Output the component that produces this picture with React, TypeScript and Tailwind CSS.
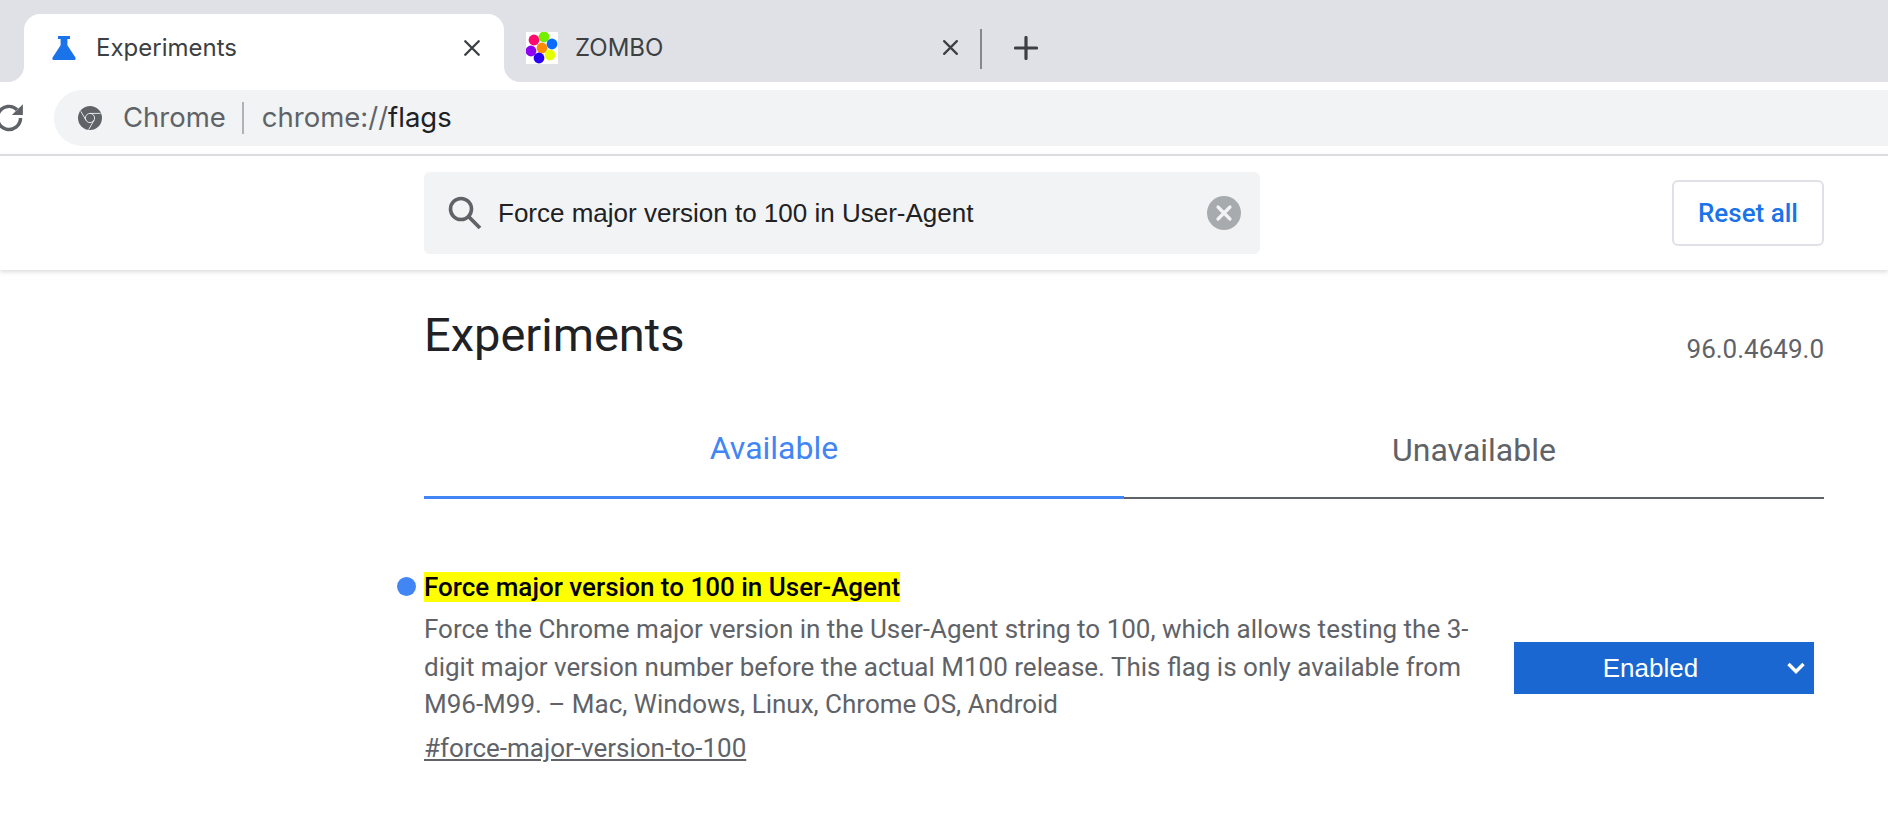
import { ReactNode } from "react";

const ui = "font-['Inter',sans-serif]";
const roboto = "font-['Roboto',sans-serif]";
const arial = "font-['Liberation_Sans',Arial,sans-serif]";

function CloseIcon({ className }: { className: string }) {
  return (
    <svg viewBox="0 0 16 16" className={className} fill="none" stroke="#3c4043" strokeWidth="2.1" strokeLinecap="round">
      <path d="M2 2l12 12M14 2L2 14" />
    </svg>
  );
}

function Flask() {
  return (
    <svg viewBox="0 0 24 24" className="w-[24px] h-[24px]" fill="#1a73e8">
      <path d="M6 0h12v3h-2.600v6.200L23.400 21.400c.7 1.200 0 2.600-1.400 2.600H2c-1.400 0-2.100-1.400-1.400-2.600L8.600 9.200V3H6z" />
    </svg>
  );
}

function Zombo() {
  const dots = [
    ["#ff0a6c", 8, 8],
    ["#72f000", 18, 5],
    ["#0a6cff", 26, 12],
    ["#ff8c00", 16, 16],
    ["#9000f0", 5, 19],
    ["#e4ff00", 24, 23],
    ["#2a00f5", 13, 26],
  ] as const;
  return (
    <svg viewBox="0 0 32 32" className="w-[32px] h-[32px] bg-white">
      {dots.map(([fill, cx, cy]) => (
        <circle key={fill} cx={cx} cy={cy} r="5.4" fill={fill} />
      ))}
    </svg>
  );
}

function ChromeLogo() {
  return (
    <svg viewBox="0 0 24 24" className="w-[24px] h-[24px]">
      <circle cx="12" cy="12" r="12" fill="#5f6368" />
      <g fill="none" stroke="#f1f3f4" strokeWidth="0.9">
        <circle cx="12" cy="12" r="4.6" />
        <path d="M12 7.400H22.500M8 14.300L2.800 5.300M16 14.300L10.700 23.500" />
      </g>
    </svg>
  );
}

function Tab({ children, className }: { children: ReactNode; className: string }) {
  return <div className={`flex items-center shrink-0 ${className}`}>{children}</div>;
}

export default function App() {
  return (
    <div className="w-full h-[834px] overflow-hidden bg-white">
      {/* tab strip */}
      <div className="h-[82px] bg-[#dfe1e6] flex items-end pl-[24px]">
        <Tab className="relative w-[480px] h-[68px] bg-white rounded-t-[16px] pl-[28px] pr-[23px] pb-[1px]">
          <span className="absolute -left-[16px] bottom-0 w-[16px] h-[16px] bg-white">
            <span className="block w-full h-full bg-[#dfe1e6] rounded-br-[16px]" />
          </span>
          <span className="absolute -right-[16px] bottom-0 w-[16px] h-[16px] bg-white">
            <span className="block w-full h-full bg-[#dfe1e6] rounded-bl-[16px]" />
          </span>
          <Flask />
          <span className={`${ui} ml-[20px] text-[24px] text-[#3c4043] flex-1`}>Experiments</span>
          <CloseIcon className="w-[18px] h-[18px]" />
        </Tab>
        <Tab className="w-[477px] h-[68px] pl-[22px] pr-[22px] pb-[1px]">
          <Zombo />
          <span className={`${ui} ml-[17px] text-[24px] text-[#3c4043] flex-1`}>ZOMBO</span>
          <CloseIcon className="w-[17px] h-[17px]" />
        </Tab>
        <div className="w-[2px] h-[40px] bg-[#86888c] mb-[13px] -ml-[1px]" />
        <svg viewBox="0 0 24 24" className="w-[24px] h-[24px] ml-[32px] mb-[22px]" fill="none" stroke="#3c4043" strokeWidth="3.200" strokeLinecap="round">
          <path d="M12 1.500v21M1.500 12h21" />
        </svg>
      </div>

      {/* toolbar */}
      <div className="h-[72px] flex items-center relative">
        <svg viewBox="0 0 26 26" className="w-[30px] h-[30px] -ml-[6px] shrink-0" fill="none">
          <path d="M23 13a10 10 0 1 1-3-7.200" stroke="#5f6368" strokeWidth="3" />
          <path d="M25 1v9.500h-9.500z" fill="#5f6368" />
        </svg>
        <div className="ml-[30px] flex-1 h-[56px] bg-[#f1f3f4] rounded-l-[28px] flex items-center pl-[24px]">
          <ChromeLogo />
          <span className={`${ui} ml-[21px] text-[27.500px] text-[#5f6368]`}>Chrome</span>
          <span className="ml-[16px] w-[2px] h-[32px] bg-[#b0b2b5]" />
          <span className={`${ui} ml-[18px] text-[27.500px] text-[#5f6368]`}>
            chrome://<span className="text-[#202124]">flags</span>
          </span>
        </div>
      </div>

      {/* flags header */}
      <div className="h-[116px] border-t-2 border-[#dadce0] shadow-[0_2px_4px_rgba(60,64,67,0.18)] pl-[424px] pr-[64px] flex items-center justify-between">
        <div className="w-[836px] h-[82px] bg-[#f1f3f4] rounded-[6px] flex items-center pl-[24px] pr-[19px]">
          <svg viewBox="0 0 34 34" className="w-[34px] h-[34px] shrink-0" fill="none" stroke="#5f6368">
            <circle cx="13" cy="13" r="10.500" strokeWidth="3.600" />
            <path d="M21 21l11 11" strokeWidth="3.800" />
          </svg>
          <span className={`${arial} ml-[16px] text-[26px] text-[#202124] flex-1`}>Force major version to 100 in User-Agent</span>
          <svg viewBox="0 0 34 34" className="w-[34px] h-[34px] shrink-0">
            <circle cx="17" cy="17" r="17" fill="#a8abae" />
            <path d="M11 11l12 12M23 11L11 23" stroke="#f1f3f4" strokeWidth="3.200" strokeLinecap="round" />
          </svg>
        </div>
        <button className={`${roboto} w-[152px] h-[66px] bg-white border-2 border-[#dfe1e6] rounded-[6px] text-[26px] font-medium text-[#1a73e8]`}>
          Reset all
        </button>
      </div>

      {/* content */}
      <div className="pl-[424px] pr-[64px]">
        <div className="flex justify-between items-end pt-[34px]">
          <h1 className={`${roboto} text-[47px] leading-[62px] text-[#202124]`}>Experiments</h1>
          <span className={`${roboto} text-[26px] leading-[32px] text-[#5f6368] mb-[1px]`}>96.0.4649.0</span>
        </div>

        <div className="flex mt-[34px]">
          <div className="flex-1 h-[99px] border-b-[3px] border-[#4285f4] flex justify-center items-center">
            <span className={`${roboto} text-[32px] text-[#4285f4]`}>Available</span>
          </div>
          <div className="flex-1 h-[99px] border-b-2 border-[#5f6368] flex justify-center items-center pt-[3px]">
            <span className={`${roboto} text-[32px] text-[#5f6368]`}>Unavailable</span>
          </div>
        </div>

        <div className={`${roboto} flex mt-[73px] relative`}>
          <span className="absolute -left-[27px] top-[5px] w-[19px] h-[19px] rounded-full bg-[#4285f4]" />
          <div className="w-[1060px]">
            <h2 className="text-[26px] leading-[30px] font-medium text-black">
              <span className="bg-[#ffff00]">Force major version to 100 in User-Agent</span>
            </h2>
            <p className="text-[26px] leading-[37.500px] text-[#5f6368] mt-[9px]">
              Force the Chrome major version in the User-Agent string to 100, which allows testing the 3-digit major version number before the actual M100 release. This flag is only available from M96-M99. – Mac, Windows, Linux, Chrome OS, Android
            </p>
            <a className="block text-[26px] leading-[37px] text-[#5f6368] underline mt-[6px]">#force-major-version-to-100</a>
          </div>
          <div className="ml-[30px] mt-[70px] w-[300px] h-[52px] bg-[#1a67d2] flex items-center">
            <span className={`${arial} w-[273px] text-center text-[26px] text-white`}>Enabled</span>
            <svg viewBox="0 0 18 12" className="w-[18px] h-[12px]" fill="none" stroke="white" strokeWidth="3.400">
              <path d="M1.500 2l7.500 7.500L16.500 2" />
            </svg>
          </div>
        </div>
      </div>
    </div>
  );
}
